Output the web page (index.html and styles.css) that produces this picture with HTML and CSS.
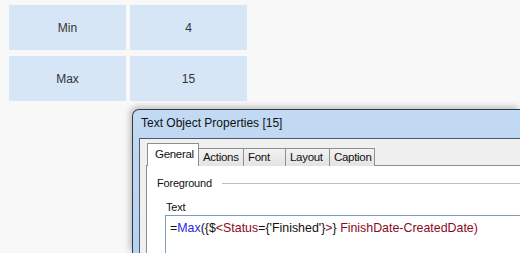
FILE: index.html
```html
<!DOCTYPE html>
<html lang="en">
<head>
    <meta charset="UTF-8">
    <title>Text Object Properties</title>
    <link rel="stylesheet" href="styles.css">
</head>
<body>

<div class="stats">
    <div class="cell">Min</div>
    <div class="cell">4</div>
    <div class="cell">Max</div>
    <div class="cell">15</div>
</div>

<div class="dialog">
    <div class="title-bar">Text Object Properties [15]</div>
    <div class="client">
        <div class="tabs">
            <div class="tab active tab-general">General</div>
            <div class="tab tab-actions">Actions</div>
            <div class="tab tab-font">Font</div>
            <div class="tab tab-layout">Layout</div>
            <div class="tab tab-caption">Caption</div>
        </div>
        <div class="panel">
            <div class="group-title"><span>Foreground</span></div>
            <div class="field-label">Text</div>
            <div class="expr">=<span class="fn">Max</span>({$<span class="fld">&lt;Status</span>={'Finished'}<span class="fld">&gt;</span>} <span class="fld">FinishDate-CreatedDate)</span></div>
        </div>
    </div>
</div>

</body>
</html>
```

FILE: styles.css
```css
* {
    box-sizing: border-box;
}
body {
    font-family: "Liberation Sans", Arial, sans-serif;
    background-color: #f8f8f8;
    margin: 0;
    padding: 0;
    width: 520px;
    height: 253px;
    overflow: hidden;
    position: relative;
}
.stats {
    display: grid;
    grid-template-columns: 117px 117px;
    grid-auto-rows: 45px;
    column-gap: 4px;
    row-gap: 6px;
    padding: 5px 0 0 9px;
}
.cell {
    background-color: #d6e6f7;
    color: #333;
    font-size: 12px;
    display: flex;
    align-items: center;
    justify-content: center;
}
.dialog {
    position: absolute;
    left: 132px;
    top: 109px;
    right: 0;
    bottom: 0;
    display: flex;
    flex-direction: column;
    background: linear-gradient(#c2daf3, #b6d2ef);
    border-top: 1px solid #2f3a46;
    border-left: 1px solid #2f3a46;
    border-radius: 7px 0 0 0;
    box-shadow: -2px -2px 6px rgba(0, 0, 0, 0.25);
}
.title-bar {
    height: 28px;
    line-height: 27px;
    padding-left: 8px;
    font-size: 12px;
    color: #111;
}
.client {
    flex: 1;
    display: flex;
    flex-direction: column;
    margin-left: 6px;
    background-color: #f0f0f0;
    border-top: 1px solid #4a5a6c;
    border-left: 1px solid #4a5a6c;
    padding: 5px 0 0 6px;
    overflow: hidden;
}
.tabs {
    display: flex;
    height: 22px;
    align-items: flex-end;
    padding-left: 1px;
    position: relative;
    z-index: 1;
}
.tab {
    height: 18px;
    line-height: 16px;
    padding-left: 4px;
    font-size: 11.5px;
    letter-spacing: -0.3px;
    color: #111;
    background: linear-gradient(#f2f2f2, #e3e3e3);
    border: 1px solid #8e8f8f;
    border-bottom: none;
    margin-right: -1px;
}
.tab.active {
    height: 23px;
    line-height: 21px;
    padding-left: 7px;
    background: #fff;
}
.tab-general {
    width: 52px;
}
.tab-actions {
    width: 46px;
}
.tab-font {
    width: 43px;
}
.tab-layout {
    width: 45px;
}
.tab-caption {
    width: 46px;
}
.panel {
    flex: 1;
    background-color: #fff;
    border: 1px solid #8e8f8f;
    border-right: none;
    margin-top: -1px;
    padding: 11px 0 0 10px;
}
.group-title {
    display: flex;
    align-items: center;
    font-size: 11px;
    letter-spacing: -0.2px;
    color: #111;
}
.group-title::after {
    content: '';
    flex: 1;
    border-bottom: 1px solid #bfbfbf;
    margin-left: 10px;
}
.field-label {
    font-size: 11px;
    letter-spacing: -0.2px;
    color: #111;
    margin: 12px 0 0 9px;
}
.expr {
    margin: 2px 0 0 8px;
    height: 40px;
    border: 1px solid #7f9cb9;
    border-right: none;
    padding: 5px 0 0 4px;
    font-size: 12.4px;
    color: #111;
    white-space: nowrap;
}
.fn {
    color: #2a2ae0;
}
.fld {
    color: #8a0b1e;
}
```
